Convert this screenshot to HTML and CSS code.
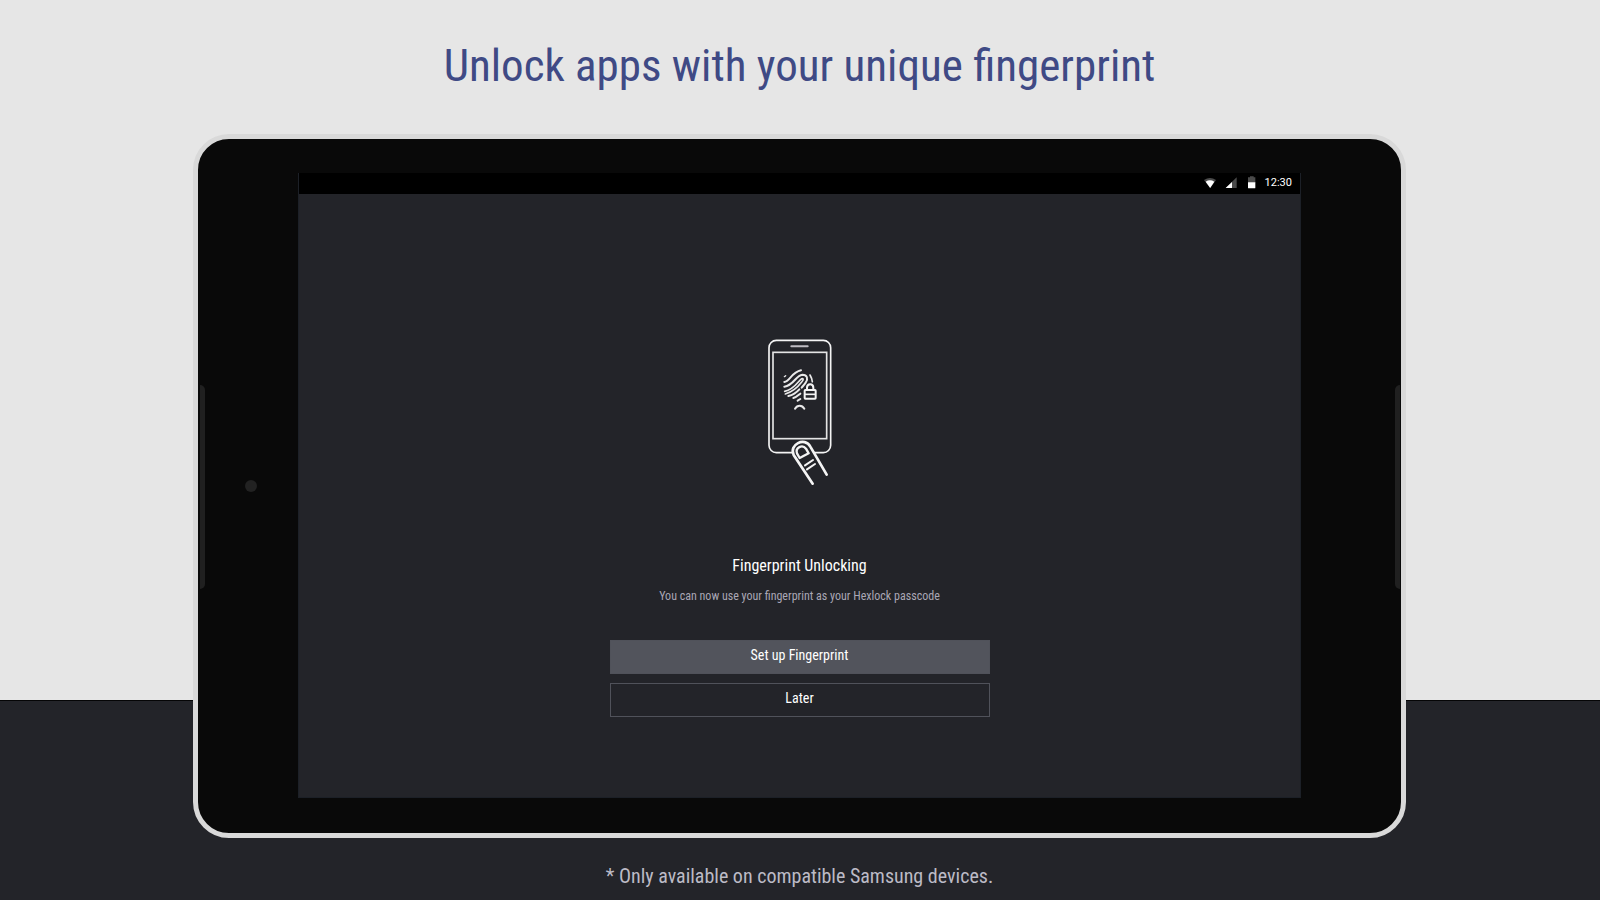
FILE: index.html
```html
<!DOCTYPE html>
<html lang="en">
<head>
<meta charset="utf-8">
<meta name="viewport" content="width=device-width, initial-scale=1">
<title>Fingerprint Unlocking</title>
<link rel="stylesheet" href="styles.css">
</head>
<body>
<div class="page">
  <h1 class="headline">Unlock apps with your unique fingerprint</h1>
  <main class="tablet">
    <span class="grip grip-left"></span>
    <span class="camera"></span>
    <span class="grip grip-right"></span>
    <section class="screen">
      <div class="status">
        <svg class="status-icons" width="54" height="14" viewBox="0 0 162 42" aria-hidden="true">
          <path d="M0 12Q18 0 36 12L18.500 36Z" fill="#4b4b4b"/>
          <path d="M5 17Q18 9 31 17L18.500 36Z" fill="#fff"/>
          <path d="M98 4V36H65Z" fill="#4b4b4b"/>
          <path d="M84 18V36H65Z" fill="#fff"/>
          <path d="M138 1H149V4H154V20H132V4H138Z" fill="#4b4b4b"/>
          <path d="M132 19H154V35Q154 37 152 37H134Q132 37 132 35Z" fill="#fff"/>
        </svg>
        <span>12:30</span>
      </div>
      <div class="content">
        <svg class="phone" width="100" height="170" viewBox="0 0 300 510" fill="none" stroke="#f4f4f4" role="img" aria-label="Finger on a phone">
          <rect x="57" y="46" width="185" height="337" rx="22" stroke-width="5"/>
          <path d="M124 64H173" stroke="#bfbcc2" stroke-width="6" stroke-linecap="round"/>
          <rect x="69" y="82" width="161" height="259" stroke="#e4e4e4" stroke-width="5"/>
          <g stroke="#e9e9e9" stroke-width="6" stroke-linecap="round">
            <path d="M103 155L107 152" stroke-width="4"/>
            <path d="M103 171C119 169 125 142 153 136"/>
            <path d="M103 185C132 181 137 151 157 149C172 149 175 162 167 173C163 179 158 184 155 188"/>
            <path d="M104 199C134 193 145 167 155 161C161 159 161 165 155 171C143 187 125 201 106 207" stroke-width="5"/>
            <path d="M115 213C127 210 139 203 148 193"/>
            <path d="M130 219C139 217 145 211 151 206"/>
            <path d="M143 227L151 222"/>
            <path d="M180 150C184 157 187 163 187 170" stroke-width="5"/>
            <path d="M135 251C142 239 156 239 163 251"/>
          </g>
          <path d="M171 194V188C171 174 190 174 190 188V194" stroke-width="6"/>
          <rect x="164" y="195" width="33" height="26" rx="2" stroke-width="6"/>
          <path d="M164 208H197" stroke-width="5"/>
          <path d="M188 476L131 390C116 359 164 334 181 365L230 449L188 476Z" fill="#232429" stroke="none"/>
          <path d="M188 476L131 390C116 359 164 334 181 365L230 449" stroke-width="8" stroke-linecap="round"/>
          <path d="M149 399L141 385C135 368 157 357 168 371L176 385Z" stroke-width="7" stroke-linejoin="round"/>
          <path d="M165 421L189 405M171 433L195 417" stroke-width="6" stroke-linecap="round"/>
        </svg>
        <h2 class="title">Fingerprint Unlocking</h2>
        <p class="text">You can now use your fingerprint as your Hexlock passcode</p>
        <div class="actions">
          <button class="button button-primary" type="button">Set up Fingerprint</button>
          <button class="button" type="button">Later</button>
        </div>
      </div>
    </section>
  </main>
  <p class="note">* Only available on compatible Samsung devices.</p>
</div>
</body>
</html>
```
FILE: styles.css
```css
* {
  box-sizing: border-box;
}

body {
  margin: 0;
  font-family: "Roboto Condensed", "Liberation Sans Narrow", Roboto, sans-serif;
  color: #fff;
}

.page {
  min-height: 100vh;
  padding: 0 194px 0 193px;
  background: linear-gradient(#e6e6e6 0 77.8%, #050506 77.8% calc(77.8% + 1px), #232429 calc(77.8% + 1px));
}

.headline {
  margin: 0;
  padding-top: 36px;
  height: 134px;
  font-size: 45px;
  line-height: 60px;
  font-weight: 400;
  text-align: center;
  color: #3f4a85;
}

.tablet {
  position: relative;
  padding: 34px 100px 35px;
  border: 5px solid #d9d9d9;
  border-radius: 36px;
  background: #090909;
}

.grip {
  position: absolute;
  top: 246px;
  width: 5px;
  height: 204px;
  background: #202020;
}

.grip-left {
  left: 2px;
  border-radius: 0 5px 5px 0;
}

.grip-right {
  right: 1px;
  border-radius: 5px 0 0 5px;
}

.camera {
  position: absolute;
  left: 47px;
  top: 341px;
  width: 12px;
  height: 12px;
  border-radius: 50%;
  background: #222;
}

.screen {
  border: 1px solid #1c2027;
  border-top: 0;
  background: #232429;
}

.status {
  display: flex;
  justify-content: flex-end;
  align-items: center;
  gap: 7px;
  height: 21px;
  padding: 0 8px 2px 0;
  background: #000;
  font: 11px/18px Roboto, sans-serif;
}

.content {
  display: flex;
  flex-direction: column;
  align-items: center;
  padding: 131px 20px 80px;
}

.phone {
  display: block;
}

.title {
  margin: 59px 0 0;
  font-size: 16px;
  line-height: 24px;
  font-weight: 400;
}

.text {
  margin: 8px 0 0;
  font-size: 12px;
  line-height: 20px;
  color: #aaa7b5;
}

.actions {
  display: grid;
  gap: 9px;
  width: 380px;
  max-width: 100%;
  margin-top: 34px;
}

.button {
  height: 34px;
  padding: 0 0 4px;
  border: 1px solid #50525a;
  background: transparent;
  font: inherit;
  font-size: 14px;
  color: #fff;
}

.button-primary {
  background: #52545c;
}

.note {
  margin: 0;
  padding-top: 24px;
  font-size: 20px;
  line-height: 28px;
  text-align: center;
  color: #bcbbc6;
}
```
